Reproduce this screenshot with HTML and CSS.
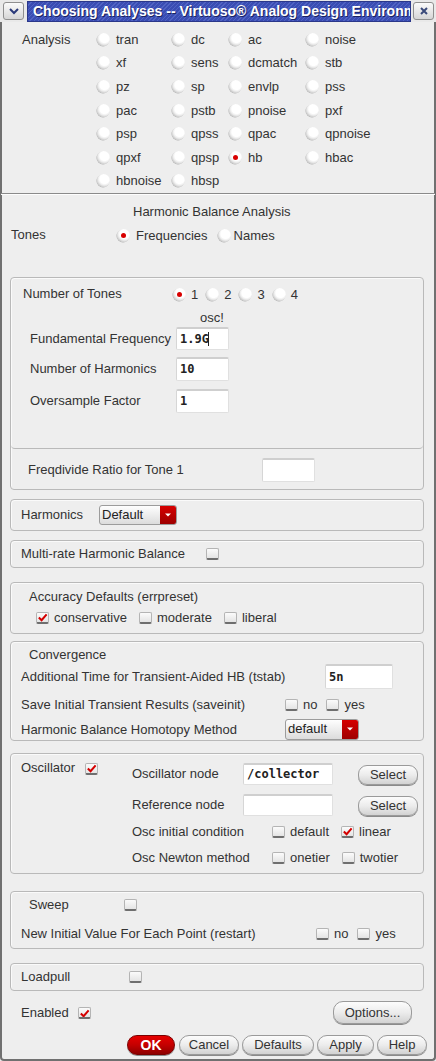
FILE: index.html
```html
<!DOCTYPE html>
<html>
<head>
<meta charset="utf-8">
<link rel="stylesheet" href="styles.css">
</head>
<body>
<div class="win">
  <div class="titlebar">
    <div class="tb-btn menu"><svg viewBox="0 0 12 10" width="12" height="10"><path d="M2 3 L6 7 L10 3" stroke="#2b3a7a" stroke-width="2" fill="none"/></svg></div>
    <div class="tb-title"><span>Choosing Analyses -- Virtuoso® Analog Design Environment</span></div>
    <div class="tb-btn close"><svg viewBox="0 0 10 10" width="10" height="10"><path d="M2 2 L8 8 M8 2 L2 8" stroke="#3a4a7a" stroke-width="2" fill="none"/></svg></div>
  </div>

  <div class="analysis">
    <div class="a-label">Analysis</div>
    <div class="a-grid">
      <div class="opt"><span class="radio"></span>tran</div>
      <div class="opt"><span class="radio"></span>dc</div>
      <div class="opt"><span class="radio"></span>ac</div>
      <div class="opt"><span class="radio"></span>noise</div>
      <div class="opt"><span class="radio"></span>xf</div>
      <div class="opt"><span class="radio"></span>sens</div>
      <div class="opt"><span class="radio"></span>dcmatch</div>
      <div class="opt"><span class="radio"></span>stb</div>
      <div class="opt"><span class="radio"></span>pz</div>
      <div class="opt"><span class="radio"></span>sp</div>
      <div class="opt"><span class="radio"></span>envlp</div>
      <div class="opt"><span class="radio"></span>pss</div>
      <div class="opt"><span class="radio"></span>pac</div>
      <div class="opt"><span class="radio"></span>pstb</div>
      <div class="opt"><span class="radio"></span>pnoise</div>
      <div class="opt"><span class="radio"></span>pxf</div>
      <div class="opt"><span class="radio"></span>psp</div>
      <div class="opt"><span class="radio"></span>qpss</div>
      <div class="opt"><span class="radio"></span>qpac</div>
      <div class="opt"><span class="radio"></span>qpnoise</div>
      <div class="opt"><span class="radio"></span>qpxf</div>
      <div class="opt"><span class="radio"></span>qpsp</div>
      <div class="opt"><span class="radio on"></span>hb</div>
      <div class="opt"><span class="radio"></span>hbac</div>
      <div class="opt"><span class="radio"></span>hbnoise</div>
      <div class="opt"><span class="radio"></span>hbsp</div>
    </div>
  </div>
  <div class="sep"></div>

  <div class="hb-title">Harmonic Balance Analysis</div>
  <div class="tones-row">
    <div class="tones-label">Tones</div>
    <div class="opt"><span class="radio on"></span>Frequencies</div>
    <div class="opt names"><span class="radio"></span>Names</div>
  </div>

  <div class="box box1">
    <div class="tone-sec">
      <div class="row num-row">
        <div class="lbl w-num">Number of Tones</div>
        <div class="opt tn"><span class="radio on small"></span>1</div>
        <div class="opt tn"><span class="radio small"></span>2</div>
        <div class="opt tn"><span class="radio small"></span>3</div>
        <div class="opt tn"><span class="radio small"></span>4</div>
      </div>
      <div class="osc-row">osc!</div>
      <div class="row field-row r-fund">
        <div class="lbl w-field">Fundamental Frequency</div>
        <div class="in w53">1.9G<span class="caret"></span></div>
      </div>
      <div class="row field-row r-harm">
        <div class="lbl w-field">Number of Harmonics</div>
        <div class="in w53 h24">10</div>
      </div>
      <div class="row field-row r-over">
        <div class="lbl w-field">Oversample Factor</div>
        <div class="in w53 h24">1</div>
      </div>
    </div>
    <div class="row fd-row">
      <div class="lbl w-fd">Freqdivide Ratio for Tone 1</div>
      <div class="in w53 h24"></div>
    </div>
  </div>

  <div class="box box-harm">
    <div class="lbl w-harm">Harmonics</div>
    <div class="dd w78"><span class="dd-text">Default</span><span class="arr"><svg viewBox="0 0 8 6" width="8" height="6"><path d="M1 1.5 L7 1.5 L4 4.5 Z" fill="#fff"/></svg></span></div>
  </div>

  <div class="box box-mr">
    <div class="lbl w-mr">Multi-rate Harmonic Balance</div>
    <span class="cb"></span>
  </div>

  <div class="box box-acc">
    <div class="acc-title">Accuracy Defaults (errpreset)</div>
    <div class="acc-row">
      <div class="opt chk"><span class="cb"><svg viewBox="0 0 12 11" width="12" height="11"><path d="M2 5.5 L5 8.5 L10.5 2" stroke="#d40000" stroke-width="2.2" fill="none"/></svg></span>conservative</div>
      <div class="opt chk"><span class="cb"></span>moderate</div>
      <div class="opt chk"><span class="cb"></span>liberal</div>
    </div>
  </div>

  <div class="box box-conv">
    <div class="conv-title">Convergence</div>
    <div class="row conv-r2">
      <div class="lbl w-tstab">Additional Time for Transient-Aided HB (tstab)</div>
      <div class="in w68 h25">5n</div>
    </div>
    <div class="row conv-r3">
      <div class="lbl w-save">Save Initial Transient Results (saveinit)</div>
      <div class="opt chk"><span class="cb"></span>no</div>
      <div class="opt chk"><span class="cb"></span>yes</div>
    </div>
    <div class="row conv-r4">
      <div class="lbl w-save">Harmonic Balance Homotopy Method</div>
      <div class="dd w74 h21"><span class="dd-text">default</span><span class="arr"><svg viewBox="0 0 8 6" width="8" height="6"><path d="M1 1.5 L7 1.5 L4 4.5 Z" fill="#fff"/></svg></span></div>
    </div>
  </div>

  <div class="box box-osc">
    <div class="osc-left">
      <span>Oscillator</span>
      <span class="cb"><svg viewBox="0 0 12 11" width="12" height="11"><path d="M2 5.5 L5 8.5 L10.5 2" stroke="#d40000" stroke-width="2.2" fill="none"/></svg></span>
    </div>
    <div class="osc-right">
      <div class="row osc-r1">
        <div class="lbl w-node">Oscillator node</div>
        <div class="in w90 h22">/collector</div>
        <div class="btn sel">Select</div>
      </div>
      <div class="row osc-r2">
        <div class="lbl w-node">Reference node</div>
        <div class="in w90 h22"></div>
        <div class="btn sel">Select</div>
      </div>
      <div class="row osc-r3">
        <div class="lbl w-cond">Osc initial condition</div>
        <div class="opt chk"><span class="cb"></span>default</div>
        <div class="opt chk"><span class="cb"><svg viewBox="0 0 12 11" width="12" height="11"><path d="M2 5.5 L5 8.5 L10.5 2" stroke="#d40000" stroke-width="2.2" fill="none"/></svg></span>linear</div>
      </div>
      <div class="row osc-r4">
        <div class="lbl w-cond">Osc Newton method</div>
        <div class="opt chk"><span class="cb"></span>onetier</div>
        <div class="opt chk"><span class="cb"></span>twotier</div>
      </div>
    </div>
  </div>

  <div class="box box-sweep">
    <div class="row sw-r1">
      <div class="lbl w-sweep">Sweep</div>
      <span class="cb"></span>
    </div>
    <div class="row sw-r2">
      <div class="lbl w-restart">New Initial Value For Each Point (restart)</div>
      <div class="opt chk"><span class="cb"></span>no</div>
      <div class="opt chk"><span class="cb"></span>yes</div>
    </div>
  </div>

  <div class="box box-lp">
    <div class="lbl w-lp">Loadpull</div>
    <span class="cb"></span>
  </div>

  <div class="en-row">
    <div class="lbl w-en">Enabled</div>
    <span class="cb"><svg viewBox="0 0 12 11" width="12" height="11"><path d="M2 5.5 L5 8.5 L10.5 2" stroke="#d40000" stroke-width="2.2" fill="none"/></svg></span>
    <div class="spacer"></div>
    <div class="btn opts">Options...</div>
  </div>

  <div class="btn-row">
    <div class="btn ok">OK</div>
    <div class="btn b-cancel">Cancel</div>
    <div class="btn b-def">Defaults</div>
    <div class="btn b-apply">Apply</div>
    <div class="btn b-help">Help</div>
  </div>
</div>
</body>
</html>
```

FILE: styles.css
```css
* { box-sizing: border-box; }
html, body { margin: 0; padding: 0; }
body {
  width: 436px;
  height: 1061px;
  overflow: hidden;
  background: #ededed;
  font-family: "Liberation Sans", Arial, sans-serif;
  font-size: 13px;
  color: #333;
}
.win {
  width: 436px;
  height: 1061px;
  border-left: 2px solid #707070;
  border-right: 2px solid #707070;
  border-bottom: 2px solid #707070;
  border-radius: 0 0 4px 4px;
  background: #eeeeee;
}

/* title bar */
.titlebar {
  height: 22px;
  display: flex;
  align-items: center;
  background: #e9e9e9;
  margin: 0 -2px;
  padding: 0 2px;
}
.tb-btn {
  width: 21px;
  height: 18px;
  border: 1px solid #8f8f8f;
  border-radius: 3px;
  background: linear-gradient(#fbfbfb, #d6d6d6);
  display: flex;
  align-items: center;
  justify-content: center;
  flex: none;
}
.menu { margin-left: 1px; }
.tb-title {
  flex: 1;
  height: 21px;
  margin: 0 2px 0 3px;
  background: repeating-linear-gradient(135deg, #3a4db3 0 2px, #5063c3 2px 3px);
  border: 1px solid #2a378a;
  overflow: hidden;
  white-space: nowrap;
  display: flex;
  align-items: center;
  padding-left: 5px;
}
.tb-title span {
  color: #fff;
  font-weight: bold;
  font-size: 14px;
  text-shadow: 1px 1px 0 #1a2360;
}

/* analysis grid */
.analysis {
  display: flex;
  margin-top: 5.5px;
}
.a-label {
  width: 75px;
  margin-left: 20px;
  height: 23.6px;
  line-height: 23.6px;
}
.a-grid {
  display: grid;
  grid-template-columns: 75px 57px 77px 100px;
  grid-auto-rows: 23.6px;
}
.opt {
  display: flex;
  align-items: center;
  white-space: nowrap;
}
.radio {
  width: 13px;
  height: 13px;
  border-radius: 50%;
  flex: none;
  margin-right: 6px;
  position: relative;
  background: radial-gradient(circle at 58% 38%, #ffffff 0 42%, #ececec 58%, #bdbdbd 80%, #8a8a8a 100%);
  box-shadow: -0.5px 0.5px 0.5px rgba(0,0,0,0.25);
}
.radio.on::after {
  content: "";
  position: absolute;
  left: 4px;
  top: 4px;
  width: 5px;
  height: 5px;
  border-radius: 50%;
  background: #d80000;
}
.sep {
  margin: 0 -1px;
  border-top: 1px solid #8a8a8a;
  border-bottom: 1px solid #fdfdfd;
}

.hb-title {
  margin-top: 9px;
  height: 16px;
  line-height: 16px;
  padding-left: 131px;
}
.tones-row {
  margin-top: 7px;
  height: 18px;
  display: flex;
  align-items: center;
}
.tones-label { width: 106px; margin-left: 9px; margin-top: -2px; }
.names { margin-left: 10px; }
.names .radio { margin-right: 3px; }

/* boxes */
.box {
  margin: 0 10px 0 8px;
  border: 1px solid #b9b9b9;
  border-radius: 4px;
  box-shadow: inset 1px 1px 0 #fafafa;
}
.row { display: flex; align-items: center; }
.lbl { flex: none; white-space: nowrap; }

.box1 { margin-top: 32px; height: 213px; }
.tone-sec {
  height: 171px;
  border-bottom: 1px solid #b9b9b9;
  border-radius: 0 0 4px 4px;
  padding-top: 8px;
}
.num-row { height: 18px; padding-left: 12px; }
.w-num { width: 150px; margin-top: -3px; }
.tn .radio { margin-right: 5px; }
.tn { margin-right: 8px; }
.osc-row {
  margin-top: 6px;
  height: 16px;
  line-height: 16px;
  padding-left: 189px;
}
.field-row { padding-left: 19px; }
.r-fund { margin-top: 1px; height: 23px; }
.r-harm { margin-top: 7px; height: 24px; }
.r-over { margin-top: 8px; height: 24px; }
.w-field { width: 146px; }
.fd-row { margin-top: 9px; height: 24px; padding-left: 17px; }
.w-fd { width: 234px; }

.in {
  background: #fff;
  border: 1px solid #e0e0e0;
  border-top: 2px solid #cfcfcf;
  border-left: 1px solid #d6d6d6;
  border-radius: 2px;
  height: 23px;
  display: flex;
  align-items: center;
  padding-left: 3px;
  font-family: "DejaVu Sans Mono", "Liberation Mono", monospace;
  font-weight: bold;
  font-size: 12px;
  color: #222;
  flex: none;
}
.caret { display: inline-block; width: 1px; height: 14px; background: #222; margin-left: -1px; }
.w53 { width: 53px; }
.w68 { width: 68px; }
.w90 { width: 90px; }
.h22 { height: 22px; }
.h24 { height: 24px; }
.h25 { height: 25px; }

.box-harm {
  margin-top: 9px;
  height: 32px;
  display: flex;
  align-items: center;
  padding-left: 10px;
}
.w-harm { width: 78px; }
.dd {
  display: flex;
  height: 20px;
  border: 1px solid #9c9c9c;
  border-radius: 3px;
  overflow: hidden;
  background: linear-gradient(#fefefe, #dcdcdc);
  flex: none;
}
.w78 { width: 78px; }
.w74 { width: 74px; }
.h21 { height: 21px; }
.dd-text { flex: 1; padding-left: 2px; line-height: 17px; color: #222; }
.arr {
  width: 16px;
  background: linear-gradient(#d60000, #9e0000);
  display: flex;
  align-items: center;
  justify-content: center;
}

.cb {
  width: 13px;
  height: 12px;
  flex: none;
  background: linear-gradient(#fbfbfb, #e4e4e4);
  border: 1px solid #b4b4b4;
  border-bottom: 2px solid #6e6e6e;
  border-radius: 2px;
  display: inline-flex;
  align-items: center;
  justify-content: center;
  overflow: hidden;
}
.cb svg { display: block; margin-top: 1px; }
.chk .cb { margin-right: 5px; }

.box-mr {
  margin-top: 9px;
  height: 28px;
  display: flex;
  align-items: center;
  padding-left: 10px;
}
.w-mr { width: 185px; }

.box-acc { margin-top: 14px; height: 52px; padding-top: 6px; }
.acc-title { height: 16px; line-height: 16px; padding-left: 18px; }
.acc-row { display: flex; align-items: center; height: 16px; margin-top: 5px; padding-left: 25px; }
.acc-row .opt { margin-right: 12px; }

.box-conv { margin-top: 7px; height: 100px; padding-top: 5px; }
.conv-title { height: 16px; line-height: 16px; padding-left: 18px; }
.conv-r2 { margin-top: 1px; height: 25px; padding-left: 10px; }
.w-tstab { width: 304px; }
.conv-r3 { margin-top: 8px; height: 16px; padding-left: 10px; }
.w-save { width: 264px; }
.conv-r3 .opt { margin-right: 9px; }
.conv-r4 { margin-top: 6px; height: 21px; padding-left: 10px; }

.box-osc {
  margin-top: 12px;
  height: 121px;
  display: flex;
}
.osc-left {
  flex: none;
  width: 121px;
  padding-left: 10px;
  padding-top: 6px;
  display: flex;
  align-items: flex-start;
  height: 28px;
}
.osc-left span:first-child { line-height: 16px; margin-right: 10px; }
.osc-left .cb { margin-top: 3px; }
.osc-right { padding-top: 9px; flex: none; }
.w-node { width: 111px; }
.osc-r1 { height: 22px; }
.osc-r2 { height: 22px; margin-top: 9px; }
.osc-r3 { height: 16px; margin-top: 8px; }
.osc-r4 { height: 16px; margin-top: 10px; }
.w-cond { width: 140px; }
.osc-r3 .opt, .osc-r4 .opt { margin-right: 12px; }
.osc-r2 .sel { margin-top: 2px; }
.osc-r1 .sel { margin-top: 2px; }

.btn {
  height: 20px;
  border: 1px solid #9a9a9a;
  border-radius: 9px;
  background: linear-gradient(#fcfcfc 0%, #ececec 50%, #d2d2d2 100%);
  box-shadow: 0 1px 0 #8a8a8a;
  display: flex;
  align-items: center;
  justify-content: center;
  color: #333;
  flex: none;
  white-space: nowrap;
}
.sel { width: 60px; margin-left: 25px; }

.box-sweep { margin-top: 17px; height: 58px; padding-top: 5px; }
.sw-r1 { height: 16px; padding-left: 18px; }
.w-sweep { width: 95px; }
.sw-r2 { height: 16px; margin-top: 13px; padding-left: 10px; }
.w-restart { width: 295px; }
.sw-r2 .opt { margin-right: 9px; }

.box-lp {
  margin-top: 14px;
  height: 28px;
  display: flex;
  align-items: center;
  padding-left: 10px;
}
.w-lp { width: 108px; }

.en-row {
  margin-top: 9px;
  height: 25px;
  display: flex;
  align-items: center;
  padding-left: 19px;
  padding-right: 22px;
}
.w-en { width: 57px; }
.en-row .cb { margin-top: 2px; }
.spacer { flex: 1; }
.opts { width: 79px; height: 23px; border-radius: 10px; }

.btn-row {
  margin-top: 10px;
  height: 21px;
  display: flex;
  justify-content: flex-end;
  gap: 3px;
  padding-right: 7px;
}
.btn-row .btn { height: 20px; border-radius: 10px; }
.ok {
  width: 48px;
  background: linear-gradient(#e60000 0%, #c40000 50%, #8e0000 100%);
  border-color: #7a0000;
  color: #fff;
  font-weight: bold;
  font-size: 14px;
  margin-right: 1px;
}
.b-cancel { width: 60px; }
.b-def { width: 72px; }
.b-apply { width: 57px; }
.b-help { width: 50px; }
```
